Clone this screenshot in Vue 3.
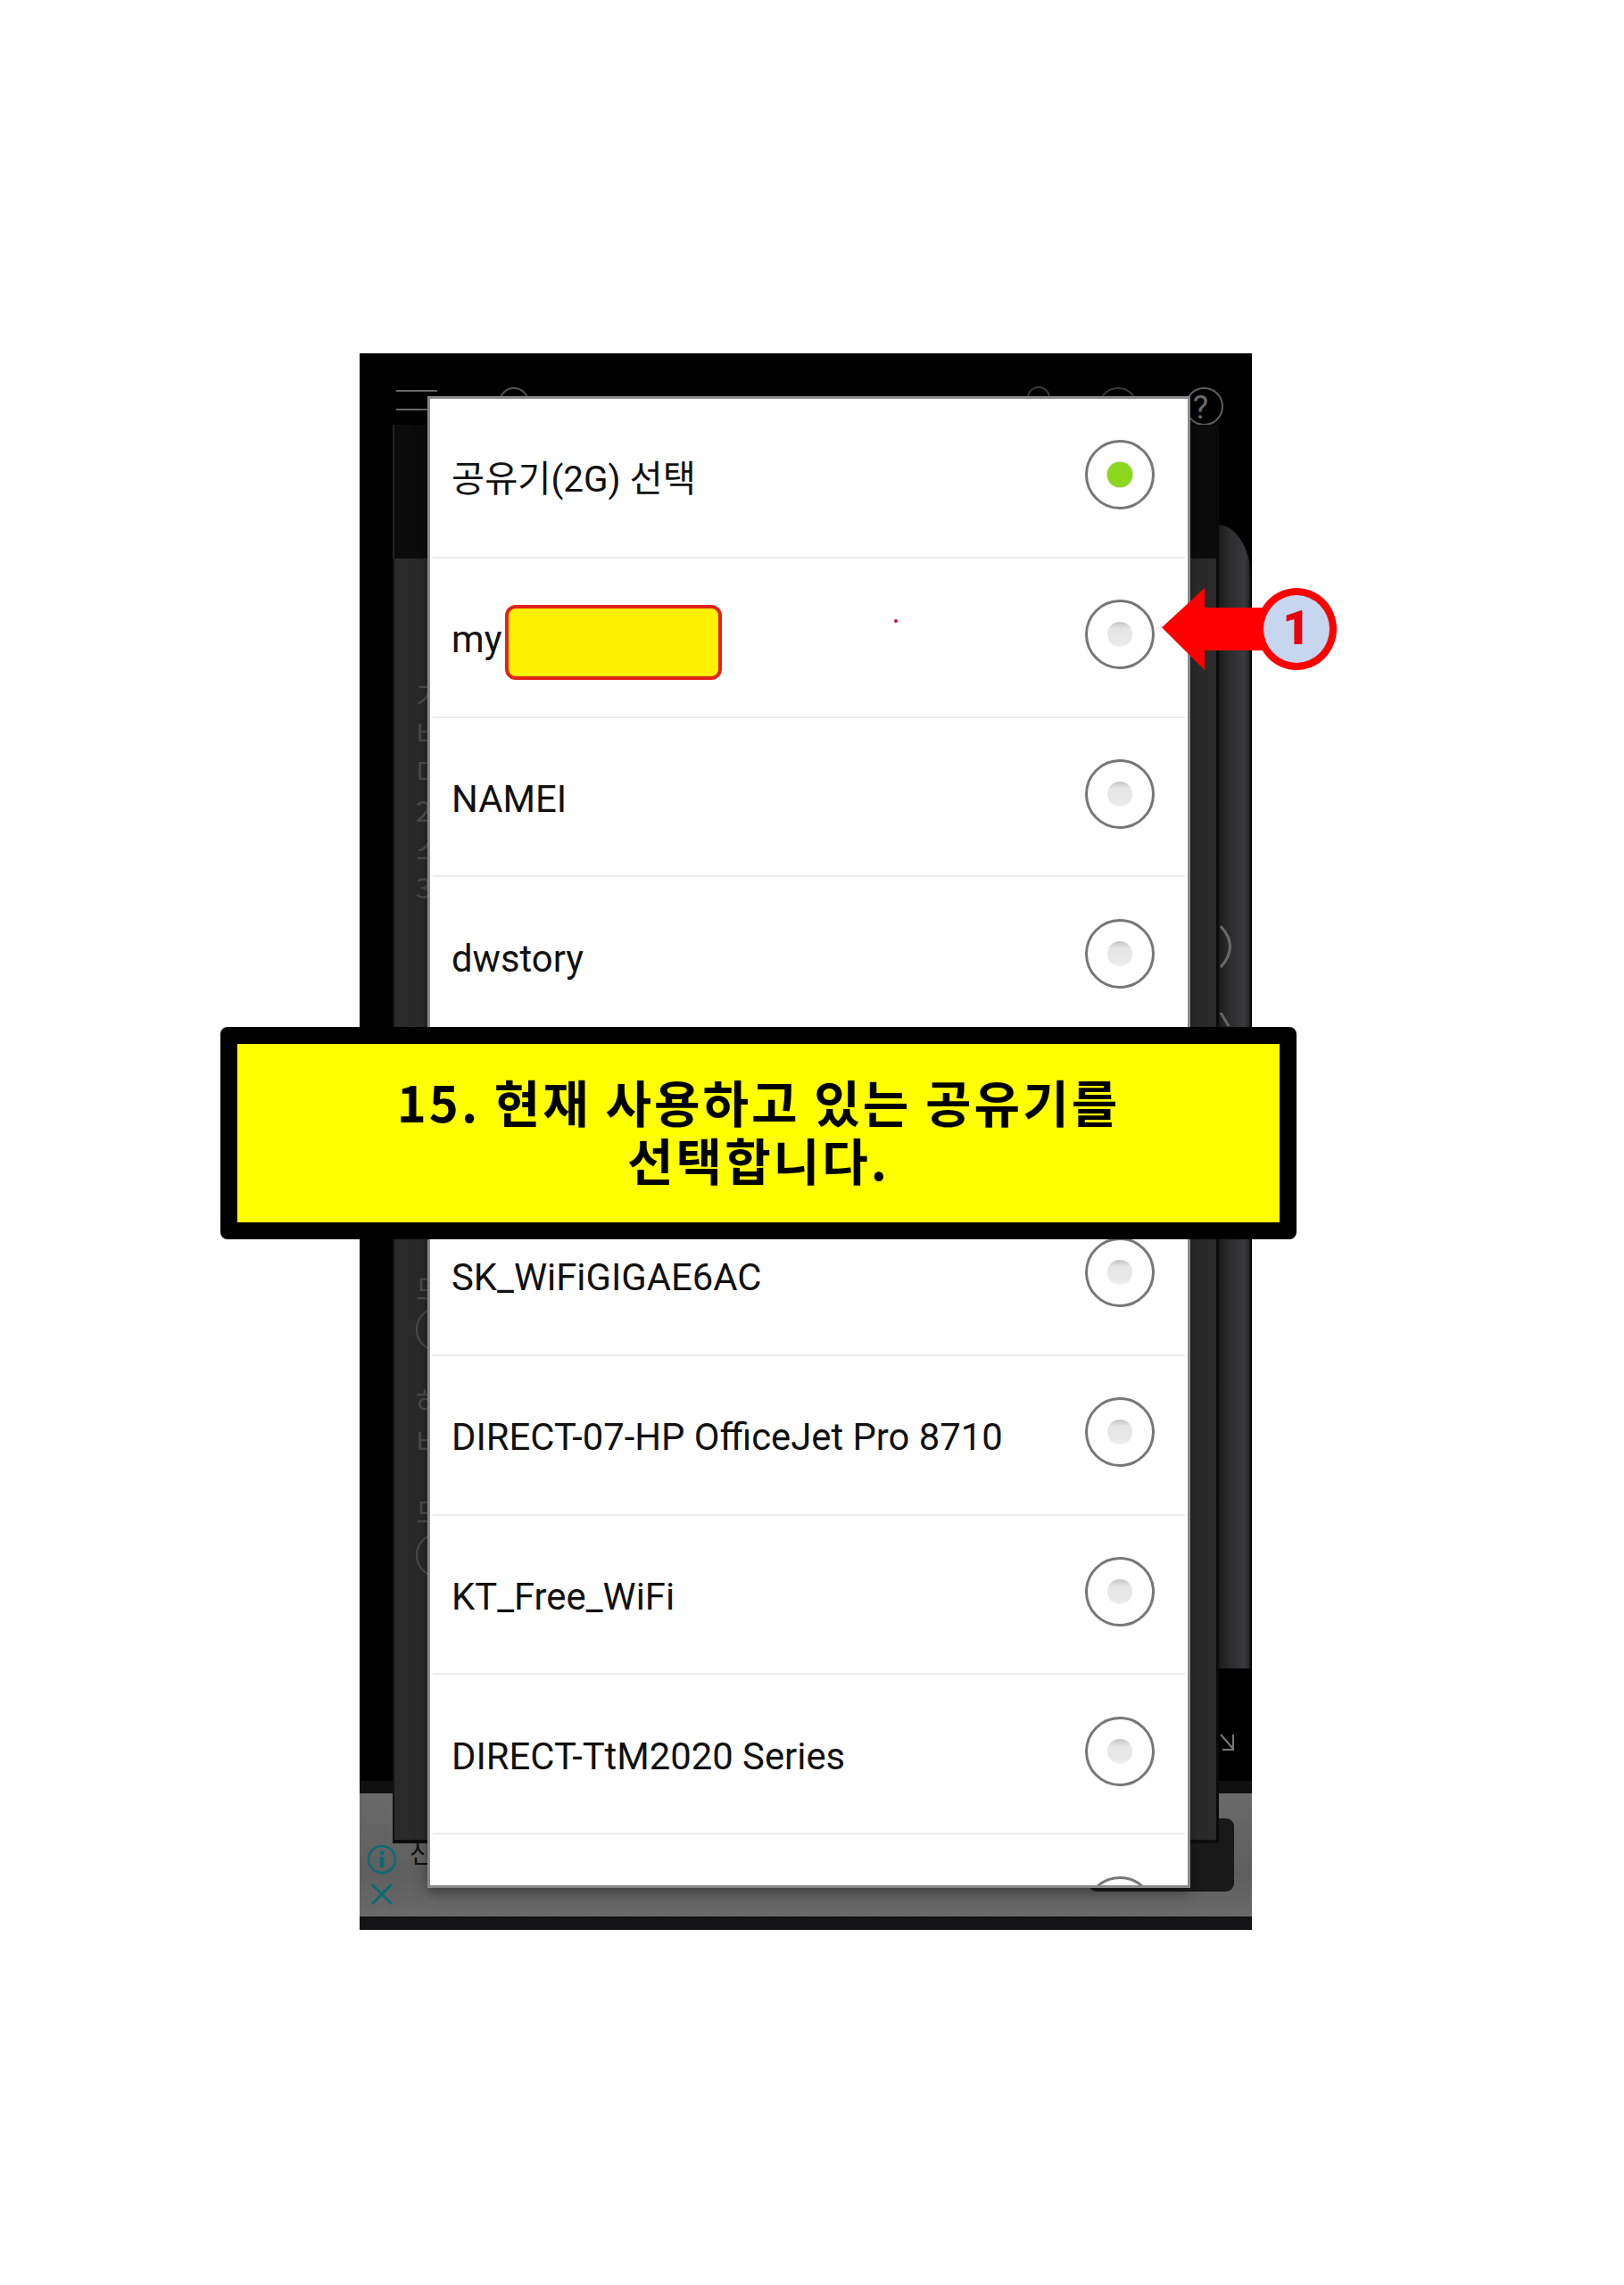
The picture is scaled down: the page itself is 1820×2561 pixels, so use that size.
<script setup>
const rows = [
  { label: '공유기(2G) 선택', on: true, title: true },
  { label: 'my' },
  { label: 'NAMEI' },
  { label: 'dwstory' },
  { label: '' },
  { label: 'SK_WiFiGIGAE6AC' },
  { label: 'DIRECT-07-HP OfficeJet Pro 8710' },
  { label: 'KT_Free_WiFi' },
  { label: 'DIRECT-TtM2020 Series' },
  { label: '' },
]
const ghostLeft = ['기', '비', '미', '2', '스', '3']
</script>

<template>
  <main class="page">
    <section class="phone">
      <header class="appbar">
        <div class="burger"><i></i><i></i></div>
        <span class="arc arc-a"></span>
        <span class="arc arc-b"></span>
        <span class="arc arc-c"></span>
        <span class="help">?</span>
      </header>
      <div class="stage">
        <div class="side-round"></div>
        <div class="panel">
          <div class="panel-top"></div>
          <div class="panel-body">
            <div class="ghost">
              <span v-for="g in ghostLeft" :key="g">{{ g }}</span>
            </div>
            <div class="ghost ghost-low">
              <span>모</span>
              <b class="ghost-ring g-ring-1"></b>
              <span class="g-a">하</span>
              <span class="g-b">비</span>
              <span class="g-c">모</span>
              <b class="ghost-ring g-ring-2"></b>
            </div>
          </div>
        </div>
        <svg class="ghost-arc" viewBox="0 0 16 48"><path d="M1 1Q22 24 1 47" fill="none" stroke="#6a6a6a" stroke-width="3"/></svg>
        <svg class="ghost-tick" viewBox="0 0 12 16"><path d="M1 0l9 15" fill="none" stroke="#666" stroke-width="3"/></svg>
        <svg class="expand" viewBox="0 0 16 20"><path d="M1 1l14 16M15 1v17H3" fill="none" stroke="#777" stroke-width="2"/></svg>
      </div>
      <div class="ad">
        <div class="ad-icons">
          <svg class="ad-info" viewBox="0 0 34 34"><circle cx="17" cy="17" r="15" fill="none" stroke="#0c6a73" stroke-width="2.5"/><circle cx="17" cy="10" r="2.4" fill="#0c6a73"/><rect x="14.6" y="14" width="4.8" height="12" fill="#0c6a73"/></svg>
          <svg class="ad-close" viewBox="0 0 26 26"><path d="M2 2l22 22M24 2L2 24" stroke="#0c6a73" stroke-width="3"/></svg>
        </div>
        <span class="ad-text">신</span>
        <div class="ad-button"></div>
      </div>
      <div class="navbar"></div>

      <div class="dialog">
        <div v-for="(row, i) in rows" :key="i" class="row">
          <span class="label" :class="{ title: row.title }">{{ row.label }}</span>
          <span class="radio" :class="{ on: row.on }"><i></i></span>
        </div>
        <div class="mask"></div>
        <div class="dot"></div>
      </div>

      <div class="marker">
        <div class="arrow-head"></div>
        <div class="arrow-shaft"></div>
        <div class="badge">1</div>
      </div>
    </section>

    <aside class="banner">15. 현재 사용하고 있는 공유기를<br />선택합니다.</aside>
  </main>
</template>

<style scoped>
.page {
  position: relative;
  height: 2561px;
  padding: 396px 0 0 403px;
  box-sizing: border-box;
  background: #fff;
  overflow: hidden;
}
.phone {
  position: relative;
  display: flex;
  flex-direction: column;
  width: 1000px;
  height: 1767px;
  background: #000;
}
.appbar {
  position: relative;
  height: 80px;
  flex: none;
}
.burger {
  position: absolute;
  left: 41px;
  top: 41px;
  width: 46px;
  height: 23px;
  display: flex;
  flex-direction: column;
  justify-content: space-between;
}
.burger i {
  display: block;
  height: 2px;
  background: #6b6b6b;
}
.arc {
  position: absolute;
  border: 2px solid #3c3c3c;
  border-radius: 50%;
  box-sizing: border-box;
}
.arc-a { left: 156px; top: 38px; width: 34px; height: 34px; border-color: #555; }
.arc-b { left: 748px; top: 37px; width: 26px; height: 26px; }
.arc-c { left: 828px; top: 38px; width: 44px; height: 44px; }
.help {
  position: absolute;
  left: 925px;
  top: 38px;
  width: 43px;
  height: 43px;
  box-sizing: border-box;
  padding-right: 8px;
  border: 2px solid #5f5f5f;
  border-radius: 50%;
  color: #6b6b6b;
  font: 37px/42px Roboto, sans-serif;
  text-align: center;
}
.stage {
  position: relative;
  flex: 1;
  min-height: 0;
  display: flex;
  padding-left: 37px;
  padding-right: 37px;
}
.side-round {
  position: absolute;
  right: 0;
  top: 112px;
  width: 39px;
  height: 1282px;
  border-top-right-radius: 38px 66px;
  background: linear-gradient(90deg, #18181a, #2a2a2d 30%, #38383d 78%, #2a2a2d 90%, #000 98%);
}
.panel {
  position: relative;
  flex: 1;
  margin-bottom: -70px;
  display: flex;
  flex-direction: column;
  border-right: 3px solid #0a0a0a;
  border-bottom: 4px solid #0d0d0d;
  z-index: 2;
}
.panel-top {
  height: 150px;
  flex: none;
  background: #0b0b0b;
  border-left: 2px solid #222;
}
.panel-body {
  position: relative;
  flex: 1;
  background: #2a2a2a;
  overflow: hidden;
  border-left: 2px solid #111;
}
.ghost {
  position: absolute;
  left: 24px;
  top: 135px;
  display: flex;
  flex-direction: column;
  gap: 9px;
  color: #4c4c4c;
  font: 32px/34px "Noto Sans CJK KR", sans-serif;
}
.ghost-low {
  top: 800px;
  gap: 0;
}
.ghost-ring {
  display: block;
  width: 50px;
  height: 50px;
  border: 2px solid #4c4c4c;
  border-radius: 50%;
  box-sizing: border-box;
}
.g-ring-1 { margin-top: 5px; }
.g-a { margin-top: 38px; }
.g-b { margin-top: 11px; }
.g-c { margin-top: 44px; }
.g-ring-2 { margin-top: 8px; }
.ghost-arc {
  position: absolute;
  left: 964px;
  top: 561px;
  width: 16px;
  height: 48px;
}
.ghost-tick {
  position: absolute;
  left: 964px;
  top: 659px;
  width: 12px;
  height: 16px;
}
.expand {
  position: absolute;
  right: 20px;
  top: 1467px;
  width: 16px;
  height: 20px;
  z-index: 3;
}
.ad {
  position: relative;
  height: 138px;
  flex: none;
  margin-top: 0;
  background: linear-gradient(180deg, #6a6a6a, #5e5e5e 65%, #6a6a6a);
  border-top: 14px solid #101010;
}
.ad-icons {
  position: absolute;
  left: 8px;
  top: 57px;
  display: flex;
  flex-direction: column;
  align-items: center;
  gap: 9px;
}
.ad-info { width: 34px; height: 34px; }
.ad-close { width: 26px; height: 26px; }
.ad-text {
  position: absolute;
  left: 56px;
  top: 49px;
  color: #111;
  font: 28px/34px "Noto Sans CJK KR", sans-serif;
}
.ad-button {
  position: absolute;
  right: 20px;
  top: 28px;
  width: 163px;
  height: 82px;
  border-radius: 9px;
  background: #191919;
}
.navbar {
  height: 15px;
  flex: none;
  background: #141417;
}
.dialog {
  position: absolute;
  left: 76px;
  top: 48px;
  width: 855px;
  height: 1672px;
  box-sizing: border-box;
  border: 3px solid #8a8a8a;
  background: #fff;
  overflow: hidden;
  box-shadow: 0 6px 14px rgba(0, 0, 0, 0.35);
  z-index: 4;
}
.row {
  position: relative;
  display: flex;
  align-items: center;
  justify-content: space-between;
  height: 178.8px;
  box-sizing: border-box;
  padding: 0 34px 0 21px;
  margin: 0 3px;
  border-bottom: 2px solid #ececec;
}
.label {
  padding-top: 6px;
  color: #111;
  font: 41.8px/50px Roboto, "Noto Sans CJK KR", sans-serif;
}
.label.title {
  font-size: 40.4px;
}
.radio {
  display: flex;
  align-items: center;
  justify-content: center;
  width: 78px;
  height: 78px;
  margin-bottom: 6px;
  box-sizing: border-box;
  border: 3.5px solid #777;
  border-radius: 50%;
  background: #fff;
}
.radio i {
  width: 28px;
  height: 28px;
  border-radius: 50%;
  background: linear-gradient(180deg, #c4c4c4, #e6e6e6 28%, #e8e8e8 80%, #f2f2f2);
}
.radio.on i {
  background: #8bd71c;
  box-shadow: 0 0 2px #6a9a22;
}
.mask {
  position: absolute;
  left: 84px;
  top: 231px;
  width: 243px;
  height: 84px;
  box-sizing: border-box;
  border: 4px solid #e2231a;
  border-radius: 12px;
  background: #fff200;
}
.dot {
  position: absolute;
  left: 520px;
  top: 247px;
  width: 4px;
  height: 4px;
  border-radius: 50%;
  background: #c8102e;
}
.marker {
  position: absolute;
  left: 899px;
  top: 263px;
  width: 196px;
  height: 92px;
  z-index: 5;
}
.arrow-head {
  position: absolute;
  left: 0;
  top: 0;
  width: 48px;
  height: 92px;
  background: #fe0000;
  clip-path: polygon(100% 0, 100% 100%, 0 48%);
}
.arrow-shaft {
  position: absolute;
  left: 47px;
  top: 22px;
  width: 70px;
  height: 48px;
  background: #fe0000;
}
.badge {
  position: absolute;
  left: 106px;
  top: 0;
  width: 90px;
  height: 92px;
  box-sizing: border-box;
  border: 8px solid #fe0000;
  border-radius: 50%;
  background: #c5d6ee;
  color: #e8000b;
  font: 900 54px/74px Roboto, sans-serif;
  text-align: center;
}
.banner {
  position: absolute;
  left: 247px;
  top: 1151px;
  width: 1206px;
  height: 238px;
  box-sizing: border-box;
  padding-top: 31px;
  border: 19px solid #000;
  border-radius: 8px;
  background: #ff0;
  color: #000;
  font: 700 56px/65px "Noto Sans CJK KR", sans-serif;
  letter-spacing: 3px;
  text-align: center;
  z-index: 6;
}
</style>

<style>
html, body { margin: 0; background: #fff; }
</style>
